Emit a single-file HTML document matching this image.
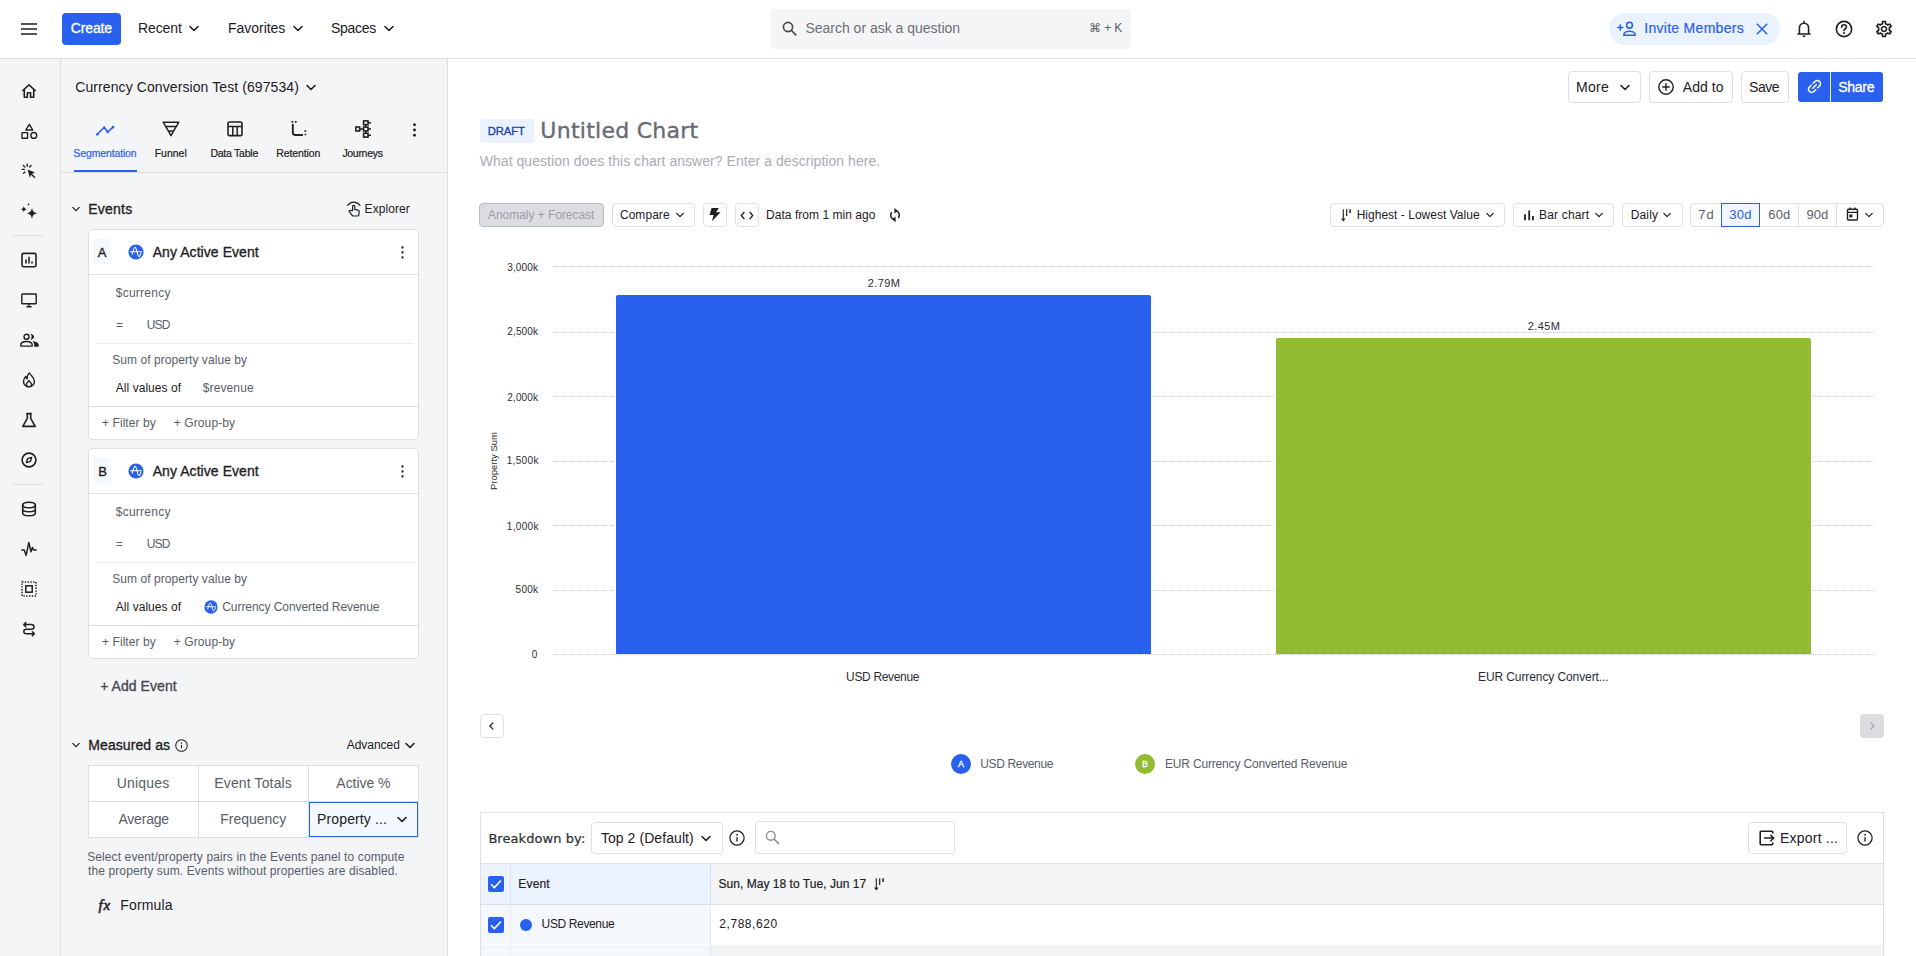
<!DOCTYPE html>
<html lang="en">
<head>
<meta charset="utf-8">
<title>Untitled Chart - Amplitude</title>
<style>
*{box-sizing:border-box;margin:0;padding:0}
html,body{width:1916px;height:956px;overflow:hidden;background:#fff}
body{font-family:"Liberation Sans",sans-serif;color:#1e2024;font-size:14px;position:relative}
.a{position:absolute}
.t{position:absolute;white-space:nowrap;line-height:20px;height:20px}
.s12{font-size:12px;line-height:16px;height:16px}
.s11{font-size:11px;line-height:14px;height:14px}
.s10{font-size:10px;line-height:12px;height:12px}
svg{position:absolute;overflow:visible}
.ic{fill:none;stroke:#1e2024;stroke-width:1.6;stroke-linecap:round;stroke-linejoin:round}
.btn{position:absolute;border:1px solid #dedfe2;border-radius:4px;background:#fff}
.g{color:#5a5e68}
.b{-webkit-text-stroke:0.33px currentColor}
#top{left:0;top:0;width:1916px;height:59px;background:#fff;border-bottom:1px solid #dedfe2}
#rail{left:0;top:59px;width:61px;height:897px;background:#f4f5f7;border-right:1px solid #dedfe2}
#panel{left:61px;top:59px;width:387px;height:897px;background:#f4f5f7;border-right:1px solid #dedfe2}
.card{position:absolute;left:88px;width:331px;background:#fff;border:1px solid #dedfe2;border-radius:4px}
.hl{position:absolute;height:1px;background:#dedfe2}
.vl{position:absolute;width:1px;background:#dedfe2}
</style>
</head>
<body>
<div class="a" id="top"></div>
<div class="a" id="rail"></div>
<div class="a" id="panel"></div>
<svg width="0" height="0" style="left:0;top:0"><defs>
<path id="chev" d="M1 1.5l4 4 4-4" fill="none" stroke="#1e2024" stroke-width="1.6" stroke-linecap="round" stroke-linejoin="round"/>
<g id="amp"><circle cx="8" cy="8" r="7.6" fill="#2960ee"/><path d="M2.400 7.700h11.200M4.200 10.300C5.200 7 6 3.200 7 3.200c1.200 0 2 4.800 2.800 7.400.5 1.600 1.100 2.200 1.700 1.700.6-.5 1-1.900 1.300-3.100" fill="none" stroke="#fff" stroke-width="1.050" stroke-linecap="round"/></g>
<g id="keb"><circle cx="1.5" cy="1.5" r="1.15"/><circle cx="1.5" cy="6.5" r="1.15"/><circle cx="1.5" cy="11.5" r="1.15"/></g>
<g id="info"><circle cx="8" cy="8" r="7.100" fill="none" stroke="#1e2024" stroke-width="1.250"/><path d="M8 7.200v4.300" stroke="#1e2024" stroke-width="1.400" fill="none"/><circle cx="8" cy="4.800" r="0.900" fill="#1e2024"/></g>
<g id="sort"><path d="M2.300 0.300V11.400M0.600 9.500l1.700 2.200 1.700-2.200" fill="none" stroke="#1e2024" stroke-width="1.100"/><path d="M5.700 0.300V7" stroke="#1e2024" stroke-width="1.200" fill="none"/><path d="M9.100 0.300V3.900" stroke="#1e2024" stroke-width="1.500" fill="none"/></g>
</defs></svg>
<!-- ===== TOP BAR ===== -->
<div id="topbar">
<svg style="left:21px;top:23px" width="16" height="12" viewBox="0 0 16 12"><path d="M0 1h16M0 6h16M0 11h16" stroke="#1e2024" stroke-width="1.400" fill="none"/></svg>
<div class="a" style="left:62px;top:13px;width:59px;height:32px;background:#2960ee;border-radius:4px"></div>
<span class="t b" style="left:70.69px;top:18px;color:#fff;letter-spacing:-0.112px">Create</span>
<span class="t" style="left:138.00px;top:18px;letter-spacing:-0.095px">Recent</span>
<svg style="left:189px;top:25px" width="10" height="7"><use href="#chev"/></svg>
<span class="t" style="left:228.00px;top:18px;letter-spacing:-0.030px">Favorites</span>
<svg style="left:293px;top:25px" width="10" height="7"><use href="#chev"/></svg>
<span class="t" style="left:331.07px;top:18px;letter-spacing:-0.286px">Spaces</span>
<svg style="left:384px;top:25px" width="10" height="7"><use href="#chev"/></svg>

<div class="a" style="left:771px;top:9px;width:360px;height:40px;background:#f4f5f7;border-radius:4px"></div>
<svg style="left:782px;top:21px" width="15" height="15" viewBox="0 0 15 15"><circle cx="6" cy="6" r="4.6" fill="none" stroke="#45484f" stroke-width="1.6"/><path d="M9.5 9.5l4.3 4.3" stroke="#45484f" stroke-width="1.7" stroke-linecap="round"/></svg>
<span class="t" style="left:805.41px;top:18px;color:#6b6f78;letter-spacing:-0.008px">Search or ask a question</span>
<span class="t s12" style="left:1089.00px;top:20px;color:#5a5e68;letter-spacing:-0.092px">⌘ + K</span>

<div class="a" style="left:1609px;top:13px;width:171px;height:32px;background:#e9f2fe;border-radius:16px"></div>
<svg style="left:1617px;top:21px" width="20" height="16" viewBox="0 0 20 16"><g fill="none" stroke="#2960ee" stroke-width="1.6" stroke-linecap="round"><path d="M0.8 6.5h5M3.3 4v5"/><circle cx="12.5" cy="4.2" r="2.9"/><path d="M6.8 14.2c0-2.6 3-3.9 5.7-3.9s5.7 1.3 5.7 3.9z" stroke-linejoin="round"/></g></svg>
<span class="t" style="left:1644.27px;top:18px;color:#2960ee;-webkit-text-stroke:0.2px #2960ee;letter-spacing:0.286px">Invite Members</span>
<svg style="left:1756px;top:23px" width="12" height="12" viewBox="0 0 12 12"><path d="M0.8 0.8l10.4 10.4M11.2 0.8L0.8 11.2" stroke="#2960ee" stroke-width="1.5" fill="none"/></svg>

<svg style="left:1796px;top:20px" width="16" height="18" viewBox="0 0 16 18"><path class="ic" d="M2 14h12M3.4 14V8.2C3.4 5.4 5.3 3.2 8 3.2s4.6 2.2 4.6 5V14M8 3V1.4"/><path d="M6.4 15.6a1.6 1.6 0 003.2 0z" fill="#1e2024"/></svg>
<svg style="left:1835px;top:20px" width="18" height="18" viewBox="0 0 18 18"><circle class="ic" cx="9" cy="9" r="7.6"/><path class="ic" d="M6.6 7.2c0-1.5 1.1-2.4 2.4-2.4s2.4.9 2.4 2.2c0 1.700-2.400 1.800-2.400 3.600"/><circle cx="9" cy="13.100" r="1" fill="#1e2024"/></svg>
<svg style="left:1873.800px;top:19px" width="20" height="20" viewBox="0 0 24 24"><path fill="#1e2024" d="M19.430 12.980c.040-.320.070-.640.070-.980s-.030-.660-.070-.980l2.110-1.650c.190-.150.240-.420.120-.640l-2-3.460c-.120-.220-.390-.300-.610-.220l-2.490 1c-.520-.400-1.080-.730-1.690-.980l-.380-2.650C14.460 2.180 14.250 2 14 2h-4c-.250 0-.460.180-.490.420l-.380 2.650c-.610.250-1.170.590-1.690.980l-2.490-1c-.230-.090-.490 0-.610.220l-2 3.460c-.130.220-.070.490.12.640l2.110 1.650c-.040.320-.070.650-.070.980s.030.660.070.980l-2.110 1.650c-.190.150-.240.420-.120.640l2 3.460c.120.220.390.300.610.220l2.490-1c.520.400 1.080.730 1.690.980l.380 2.650c.030.240.240.420.490.420h4c.250 0 .460-.180.490-.420l.380-2.650c.610-.250 1.170-.590 1.690-.980l2.490 1c.230.090.490 0 .610-.220l2-3.460c.120-.220.070-.490-.12-.640l-2.110-1.650zm-1.980-1.710c.040.310.050.520.050.730s-.02.430-.05.730l-.14 1.130.89.700 1.080.84-.7 1.210-1.270-.51-1.040-.42-.9.680c-.43.320-.84.560-1.250.73l-1.060.43-.16 1.130-.2 1.350h-1.400l-.19-1.350-.16-1.130-1.060-.43c-.43-.18-.83-.41-1.230-.71l-.91-.7-1.060.43-1.270.51-.7-1.210 1.080-.84.890-.7-.14-1.130c-.03-.31-.05-.54-.05-.74s.02-.43.050-.73l.14-1.130-.89-.7-1.080-.84.700-1.210 1.270.51 1.040.42.900-.68c.43-.32.840-.56 1.250-.73l1.060-.43.160-1.130.2-1.350h1.390l.19 1.350.16 1.130 1.060.43c.43.180.83.410 1.230.71l.91.700 1.060-.43 1.270-.51.700 1.210-1.070.85-.89.700.14 1.130zM12 8c-2.210 0-4 1.790-4 4s1.790 4 4 4 4-1.790 4-4-1.790-4-4-4zm0 6c-1.100 0-2-.9-2-2s.9-2 2-2 2 .9 2 2-.9 2-2 2z"/></svg>
</div>
<!-- ===== LEFT RAIL ===== -->
<div id="railicons">
<!-- home -->
<svg style="left:21px;top:83px" width="16" height="16" viewBox="0 0 16 16"><path class="ic" style="stroke-linecap:butt" d="M1.300 8L8 1.800 14.700 8M3.300 6.800V14.200H6.400V9.800H9.600V14.200H12.700V6.800"/></svg>
<!-- shapes -->
<svg style="left:21px;top:123px" width="16" height="16" viewBox="0 0 16 16"><path class="ic" style="stroke-width:1.400" d="M8.300 1.300l3.500 5.700H4.800z"/><rect class="ic" style="stroke-width:1.400" x="1" y="9.600" width="5.600" height="5.600"/><circle class="ic" style="stroke-width:1.400" cx="12.800" cy="12.400" r="2.900"/></svg>
<!-- cursor click -->
<svg style="left:21px;top:163px" width="16" height="16" viewBox="0 0 16 16"><path d="M6.600 6.600l7.400 3-3 1.200 3.400 3.400-1 1-3.400-3.400-1.200 3z" fill="#1e2024"/><path class="ic" style="stroke-width:1.400" d="M6.200 1.300v2M2.400 2.600l1.400 1.400M1.200 6.400h2M2.600 10.200l1.300-1.300M10 2.600L8.700 3.900"/></svg>
<!-- sparkles -->
<svg style="left:21px;top:203px" width="16" height="16" viewBox="0 0 16 16"><path d="M11 4.700c.700 3.600 1.600 4.600 5.200 5.600-3.600 1-4.500 2-5.200 5.700-.700-3.700-1.600-4.700-5.200-5.700 3.600-1 4.500-2 5.200-5.600z" fill="#1e2024"/><path d="M2.800 3c.400 2 .900 2.600 3 3.200-2.100.600-2.600 1.200-3 3.200-.400-2-.900-2.600-3-3.200 2.100-.600 2.600-1.200 3-3.200z" fill="#1e2024"/><path d="M7.600 -0.200l.4 1.100 1.100.4-1.100.4-.4 1.100-.4-1.100-1.100-.4 1.100-.4z" fill="#1e2024"/></svg>
<div class="hl" style="left:12px;top:235px;width:32px"></div>
<!-- chart box -->
<svg style="left:21px;top:252px" width="16" height="16" viewBox="0 0 16 16"><rect class="ic" x="1" y="1.400" width="14" height="13.400" rx="1.600"/><path class="ic" style="stroke-linecap:butt" d="M5 11.600V7.400M8 11.600V4.800M11 11.600V9.400"/></svg>
<!-- monitor -->
<svg style="left:21px;top:292px" width="16" height="16" viewBox="0 0 16 16"><rect class="ic" style="stroke-width:1.400" x="0.800" y="2" width="14.400" height="9.800" rx="0.600"/><path class="ic" style="stroke-width:1.400;stroke-linecap:butt" d="M5.400 14.700h5.200M8 11.800v2.800"/></svg>
<!-- users -->
<svg style="left:20px;top:332px" width="19" height="16" viewBox="0 0 19 16"><circle class="ic" style="stroke-width:1.400" cx="6.500" cy="4.800" r="2.500"/><path class="ic" style="stroke-width:1.400" d="M0.800 14.100v-1c0-2.400 2.900-3.600 5.700-3.600s5.700 1.200 5.700 3.600v1z"/><path d="M10.200 1.900c2.100 0 3.900 1.200 3.900 2.900s-1.800 2.900-3.900 2.900c.9-.7 1.400-1.700 1.400-2.900s-.5-2.200-1.400-2.900z" fill="#1e2024"/><path d="M12.500 9.200c3 .2 6.200 1.400 6.200 3.900v1.700h-4.500v-1.700c0-1.600-.6-2.900-1.700-3.900z" fill="#1e2024"/></svg>
<!-- flame -->
<svg style="left:21px;top:372px" width="16" height="16" viewBox="0 0 16 16"><path class="ic" style="stroke-width:1.400" d="M8.600 1c.3 2.300 4.800 3.800 4.800 8.400 0 3.100-2.500 5.500-5.500 5.500S2.500 12.400 2.500 9.400c0-2 .9-3.700 2.200-4.900.3 1.300.9 2 1.600 2.300C5.800 4.400 7 2.200 8.600 1z"/><path class="ic" style="stroke-width:1.300" d="M8 14.700c-1.500 0-2.500-1-2.500-2.300 0-1.600 1.500-2.200 2.500-3.800.6 1.600 2.500 2.200 2.500 3.800 0 1.300-1 2.300-2.500 2.300z"/></svg>
<!-- flask -->
<svg style="left:21px;top:412px" width="16" height="16" viewBox="0 0 16 16"><path class="ic" style="stroke-linecap:butt" d="M5.200 1.600h5.600M6.300 1.800v4.600L1.800 14.400h12.400L9.700 6.400V1.800M1.400 14.500h13.200"/></svg>
<!-- compass -->
<svg style="left:21px;top:452px" width="16" height="16" viewBox="0 0 16 16"><circle class="ic" cx="8" cy="8" r="6.900"/><path class="ic" style="stroke-width:1.500" d="M10.600 5.400L9.400 9.400 5.400 10.600 6.600 6.600z"/></svg>
<div class="hl" style="left:12px;top:484px;width:32px"></div>
<!-- database -->
<svg style="left:21px;top:501px" width="16" height="16" viewBox="0 0 16 16"><ellipse class="ic" cx="8" cy="4" rx="6.300" ry="2.800"/><path class="ic" d="M1.700 4v8c0 1.600 2.800 2.800 6.300 2.800s6.300-1.200 6.300-2.800V4M1.700 8c0 1.600 2.800 2.800 6.300 2.800s6.300-1.200 6.300-2.800"/></svg>
<!-- pulse -->
<svg style="left:21px;top:541px" width="16" height="16" viewBox="0 0 16 16"><path class="ic" style="stroke-width:1.500" d="M0.800 9h2.400l2 5.400 2.600-13 2.200 9.400 1.400-4.400 1.200 2.600h2.600"/></svg>
<!-- dotted square -->
<svg style="left:21px;top:581px" width="16" height="16" viewBox="0 0 16 16"><rect x="1" y="1" width="14" height="14" fill="none" stroke="#1e2024" stroke-width="1.500" stroke-dasharray="1.400 1.400"/><rect x="4.800" y="4.800" width="6.400" height="6.400" fill="none" stroke="#1e2024" stroke-width="1.500"/></svg>
<!-- arrows -->
<svg style="left:21px;top:621px" width="16" height="16" viewBox="0 0 16 16"><path class="ic" style="stroke-width:1.500" d="M2.800 3.600h7.600c1.600 0 2.600 1 2.600 2.300s-1 2.300-2.600 2.300H5.400C3.800 8.200 2.800 9.200 2.800 10.500s1 2.300 2.600 2.300h7.800M4.800 1.600L2.800 3.600l2 2M11.400 10.800l2 2-2 2"/></svg>
</div>
<!-- ===== LEFT PANEL ===== -->
<div id="leftpanel">
<span class="t" style="left:75.31px;top:77px;letter-spacing:0.088px">Currency Conversion Test (697534)</span>
<svg style="left:306px;top:84px" width="10" height="7"><use href="#chev"/></svg>

<!-- tabs -->
<svg style="left:95px;top:124px" width="20" height="13" viewBox="0 0 20 13"><path d="M2.400 10.200L9.200 3.300 12.700 8 18.100 3.100" fill="none" stroke="#2960ee" stroke-width="1.600" stroke-linejoin="round"/><circle cx="2.400" cy="10.300" r="1.400" fill="#2960ee"/><circle cx="18.100" cy="3.100" r="1.300" fill="#2960ee"/><circle cx="12.700" cy="8" r="1.200" fill="#2960ee"/><circle cx="9.200" cy="3.300" r="1" fill="#2960ee"/></svg>
<span class="t s11" style="left:73.36px;top:146px;font-size:10.500px;color:#2960ee;letter-spacing:-0.136px;-webkit-text-stroke:0.2px #2960ee">Segmentation</span>
<div class="a" style="left:74px;top:170px;width:63px;height:2px;background:#2960ee"></div>
<svg style="left:162px;top:121px" width="18" height="16" viewBox="0 0 18 16"><path class="ic" style="stroke-width:1.500" d="M1.200 1.200h15.600L9 14.600zM3.800 5.600h10.400M6.300 10h5.400"/></svg>
<span class="t s11" style="left:154.68px;top:146px;font-size:10.500px;letter-spacing:0.003px;-webkit-text-stroke:0.2px #1e2024">Funnel</span>
<svg style="left:227px;top:121px" width="16" height="16" viewBox="0 0 16 16"><rect class="ic" x="1" y="1" width="14" height="13.600" rx="1.400"/><path class="ic" style="stroke-width:1.500;stroke-linecap:butt" d="M1 5.400h14M5.800 5.400v9M10.200 5.400v9"/></svg>
<span class="t s11" style="left:210.40px;top:146px;font-size:10.500px;letter-spacing:-0.242px;-webkit-text-stroke:0.2px #1e2024">Data Table</span>
<svg style="left:290px;top:121px" width="18" height="16" viewBox="0 0 18 16"><path class="ic" style="stroke-width:1.900" d="M2.800 3.800v7.400c0 1.800 1 2.800 2.800 2.800h6.600"/><path d="M1.600 0.900h1.700M4.900 0.900h1.700M15.400 9.300v1.600M15.400 12.700v1.600" stroke="#1e2024" stroke-width="1.600" fill="none"/></svg>
<span class="t s11" style="left:276.21px;top:146px;font-size:10.500px;letter-spacing:-0.101px;-webkit-text-stroke:0.2px #1e2024">Retention</span>
<svg style="left:355px;top:120px" width="17" height="18" viewBox="0 0 17 18"><g fill="none" stroke="#1e2024" stroke-width="1.600"><rect x="0.900" y="7" width="3.800" height="4"/><rect x="8.600" y="0.900" width="4.400" height="3.800"/><rect x="8.600" y="7.100" width="4.400" height="3.800"/><rect x="8.600" y="13.300" width="4.400" height="3.800"/><path d="M4.700 9h3.900M10.800 4.700v2.400M10.800 10.900v2.400M13 2.800h3M13 9h3M13 15.200h3"/></g></svg>
<span class="t s11" style="left:342.39px;top:146px;font-size:10.500px;letter-spacing:-0.296px;-webkit-text-stroke:0.2px #1e2024">Journeys</span>
<svg style="left:413.300px;top:122.800px" width="3" height="14" viewBox="0 0 3 14" fill="#1e2024"><circle cx="1.500" cy="1.700" r="1.450"/><circle cx="1.500" cy="7" r="1.450"/><circle cx="1.500" cy="12.300" r="1.450"/></svg>
<div class="hl" style="left:61px;top:172px;width:386px"></div>

<!-- Events header -->
<svg style="left:72px;top:206px" width="8" height="6" viewBox="0 0 10 7"><use href="#chev"/></svg>
<span class="t b" style="left:88.30px;top:199px;letter-spacing:0.219px">Events</span>
<svg style="left:347px;top:201px" width="14" height="16" viewBox="0 0 14 16"><g fill="none" stroke="#1e2024" stroke-width="1.200" stroke-linecap="round" stroke-linejoin="round"><path d="M0.600 4.300C2.300 2.200 4.400 1.100 6.800 1.100s4.500 1.100 6.200 3.200"/><path d="M5.600 9.600V5.400c0-.7.500-1.100 1.100-1.100s1.100.4 1.100 1.100v3l3.200.7c.9.200 1.300.8 1.200 1.600l-.4 3.200c-.1.700-.6 1.100-1.300 1.100H6.400c-.5 0-.9-.2-1.200-.6L2.400 10.800c-.3-.4-.2-.9.200-1.200.5-.3 1-.2 1.400.1z"/></g></svg>
<span class="t s12 " style="left:364.59px;top:201px;letter-spacing:0.056px">Explorer</span>

<!-- Card A -->
<div class="card" style="top:229px;height:211px"></div>
<div class="a" style="left:93px;top:239px;width:18px;height:25px;background:#f5f8fd;border-radius:2px"></div>
<span class="t b" style="left:97.800px;top:242.500px;font-size:13px">A</span>
<svg style="left:128px;top:244px" width="16" height="16" viewBox="0 0 16 16"><use href="#amp"/></svg>
<span class="t b" style="left:152.70px;top:242px;letter-spacing:0.063px">Any Active Event</span>
<svg style="left:400.500px;top:246px" width="3" height="13" fill="#1e2024" viewBox="0 0 3 13"><use href="#keb"/></svg>
<div class="hl" style="left:89px;top:274px;width:329px"></div>
<span class="t s12 g" style="left:115.77px;top:285px;letter-spacing:0.241px">$currency</span>
<span class="t s12 g" style="left:116px;top:317px">=</span>
<span class="t s12 g" style="left:146.70px;top:317px;letter-spacing:-0.796px">USD</span>
<div class="hl" style="left:97px;top:343px;width:317px;background:#ececef"></div>
<span class="t s12 g" style="left:112.20px;top:352px;letter-spacing:0.061px">Sum of property value by</span>
<span class="t s12" style="left:115.76px;top:380px;letter-spacing:0.052px">All values of</span>
<span class="t s12 g" style="left:202.77px;top:380px;letter-spacing:0.114px">$revenue</span>
<div class="hl" style="left:89px;top:406px;width:329px"></div>
<span class="t s12 g" style="left:102.04px;top:415px;letter-spacing:0.067px">+ Filter by</span>
<span class="t s12 g" style="left:173.65px;top:415px;letter-spacing:0.120px">+ Group-by</span>

<!-- Card B -->
<div class="card" style="top:448px;height:211px"></div>
<div class="a" style="left:93px;top:458px;width:18px;height:25px;background:#f5f8fd;border-radius:2px"></div>
<span class="t b" style="left:98.300px;top:461.500px;font-size:13px">B</span>
<svg style="left:128px;top:463px" width="16" height="16" viewBox="0 0 16 16"><use href="#amp"/></svg>
<span class="t b" style="left:152.70px;top:461px;letter-spacing:0.063px">Any Active Event</span>
<svg style="left:400.500px;top:465px" width="3" height="13" fill="#1e2024" viewBox="0 0 3 13"><use href="#keb"/></svg>
<div class="hl" style="left:89px;top:493px;width:329px"></div>
<span class="t s12 g" style="left:115.77px;top:504px;letter-spacing:0.241px">$currency</span>
<span class="t s12 g" style="left:116px;top:536px">=</span>
<span class="t s12 g" style="left:146.70px;top:536px;letter-spacing:-0.796px">USD</span>
<div class="hl" style="left:97px;top:562px;width:317px;background:#ececef"></div>
<span class="t s12 g" style="left:112.20px;top:571px;letter-spacing:0.061px">Sum of property value by</span>
<span class="t s12" style="left:115.76px;top:599px;letter-spacing:0.052px">All values of</span>
<svg style="left:204px;top:600px" width="14" height="14" viewBox="0 0 16 16"><use href="#amp"/></svg>
<span class="t s12 g" style="left:222.26px;top:599px;letter-spacing:-0.060px">Currency Converted Revenue</span>
<div class="hl" style="left:89px;top:625px;width:329px"></div>
<span class="t s12 g" style="left:102.04px;top:634px;letter-spacing:0.067px">+ Filter by</span>
<span class="t s12 g" style="left:173.65px;top:634px;letter-spacing:0.120px">+ Group-by</span>

<span class="t b" style="left:100.15px;top:676px;color:#45484f;letter-spacing:0.060px">+ Add Event</span>

<!-- Measured as -->
<svg style="left:72px;top:742px" width="8" height="6" viewBox="0 0 10 7"><use href="#chev"/></svg>
<span class="t b" style="left:88.30px;top:735px;letter-spacing:0.079px">Measured as</span>
<svg style="left:174.500px;top:738.500px" width="13" height="13" viewBox="0 0 16 16"><use href="#info"/></svg>
<span class="t s12" style="left:346.77px;top:737px;letter-spacing:-0.039px">Advanced</span>
<svg style="left:405px;top:742px" width="10" height="7"><use href="#chev"/></svg>

<div class="a" style="left:88px;top:765px;width:331px;height:73px;background:#fff;border:1px solid #dedfe2"></div>
<div class="hl" style="left:88px;top:801px;width:331px"></div>
<div class="vl" style="left:198px;top:765px;height:73px"></div>
<div class="vl" style="left:308px;top:765px;height:73px"></div>
<div class="a" style="left:309px;top:802px;width:109px;height:35px;background:#f3f7fe;border:1px solid #2960ee"></div>
<span class="t g" style="left:88.54px;top:773px;width:109px;text-align:center;letter-spacing:0.202px">Uniques</span>
<span class="t g" style="left:198.64px;top:773px;width:109px;text-align:center;letter-spacing:0.141px">Event Totals</span>
<span class="t g" style="left:308.95px;top:773px;width:109px;text-align:center;letter-spacing:-0.033px">Active %</span>
<span class="t g" style="left:89.18px;top:809px;width:109px;text-align:center;letter-spacing:-0.195px">Average</span>
<span class="t g" style="left:198.72px;top:809px;width:109px;text-align:center;letter-spacing:-0.026px">Frequency</span>
<span class="t" style="left:317.06px;top:809px;letter-spacing:0.130px">Property ...</span>
<svg style="left:396.500px;top:816px" width="10" height="7"><use href="#chev"/></svg>

<span class="t s12 g" style="left:87.15px;top:849px;letter-spacing:0.114px">Select event/property pairs in the Events panel to compute</span>
<span class="t s12 g" style="left:88.00px;top:863px;letter-spacing:0.113px">the property sum. Events without properties are disabled.</span>
<span class="t" style="left:98.500px;top:895px;font-family:'Liberation Serif',serif;font-style:italic;font-size:15px;letter-spacing:0.800px;-webkit-text-stroke:0.550px #1e2024">fx</span>
<span class="t" style="left:120.37px;top:895px;letter-spacing:0.123px">Formula</span>
</div>
<!-- ===== MAIN HEADER ===== -->
<div id="mainhead">
<div class="btn" style="left:1568px;top:71px;width:73px;height:32px"></div>
<span class="t" style="left:1576.00px;top:77px;letter-spacing:0.263px">More</span>
<svg style="left:1619.500px;top:84px" width="10" height="7"><use href="#chev"/></svg>
<div class="btn" style="left:1649px;top:71px;width:84px;height:32px"></div>
<svg style="left:1658px;top:79px" width="16" height="16" viewBox="0 0 16 16"><circle cx="8" cy="8" r="7.200" fill="none" stroke="#1e2024" stroke-width="1.400"/><path d="M8 4.300v7.400M4.300 8h7.400" stroke="#1e2024" stroke-width="1.400" fill="none"/></svg>
<span class="t" style="left:1682.77px;top:77px;letter-spacing:0.058px">Add to</span>
<div class="btn" style="left:1741px;top:71px;width:48px;height:32px"></div>
<span class="t" style="left:1749.07px;top:77px;letter-spacing:-0.501px">Save</span>
<div class="a" style="left:1798px;top:72px;width:85px;height:30px;background:#2960ee;border-radius:3px"></div>
<div class="a" style="left:1830px;top:72px;width:1px;height:30px;background:#e6ecfc"></div>
<svg style="left:1804.600px;top:77.300px" width="19" height="19" viewBox="0 0 24 24"><path transform="rotate(-45 12 12)" fill="#fff" d="M3.900 12c0-1.710 1.390-3.100 3.100-3.100h4V7H7c-2.760 0-5 2.240-5 5s2.240 5 5 5h4v-1.900H7c-1.710 0-3.100-1.390-3.100-3.100zM8 13h8v-2H8v2zm9-6h-4v1.900h4c1.710 0 3.100 1.390 3.100 3.100s-1.390 3.100-3.100 3.100h-4V17h4c2.760 0 5-2.240 5-5s-2.240-5-5-5z"/></svg>
<span class="t b" style="left:1838.25px;top:77px;color:#fff;letter-spacing:-0.279px">Share</span>

<div class="a" style="left:480px;top:119px;width:54px;height:24px;background:#e9f2fe;border-radius:3px"></div>
<span class="t s12" style="left:487.79px;top:123.300px;font-size:11.300px;color:#1f3fae;-webkit-text-stroke:0.3px #1f3fae;letter-spacing:-0.113px">DRAFT</span>
<span class="t" style="left:540.35px;top:117px;font-family:'DejaVu Sans',sans-serif;font-size:22px;line-height:28px;height:28px;color:#666a73;-webkit-text-stroke:0.35px #666a73;letter-spacing:0.263px">Untitled Chart</span>
<span class="t" style="left:479.71px;top:151px;color:#a9acb4;letter-spacing:0.046px">What question does this chart answer? Enter a description here.</span>

<!-- toolbar -->
<div class="a" style="left:479px;top:203px;width:125px;height:24px;background:#dcdde1;border:1px solid #b9bbc2;border-radius:4px"></div>
<span class="t s12" style="left:487.97px;top:207px;color:#9b9ea7;letter-spacing:-0.040px">Anomaly + Forecast</span>
<div class="btn" style="left:612px;top:203px;width:83px;height:24px"></div>
<span class="t s12" style="left:619.92px;top:207px;letter-spacing:0.056px">Compare</span>
<svg style="left:675.500px;top:212px" width="8" height="6" viewBox="0 0 10 7"><use href="#chev"/></svg>
<div class="btn" style="left:703px;top:203px;width:24px;height:24px"></div>
<svg style="left:709px;top:207px" width="12" height="15" viewBox="0 0 12 15"><path d="M2.600 1H9.800L7.100 5.300H11.600L2.900 14.200 4.700 8.100H0.500z" fill="#1e2024"/></svg>
<div class="btn" style="left:735px;top:203px;width:24px;height:24px"></div>
<svg style="left:740px;top:210.500px" width="14" height="9" viewBox="0 0 14 9"><path d="M4.400 0.900L1.300 4.500 4.400 8.100M9.600 0.900l3.100 3.600L9.600 8.100" fill="none" stroke="#1e2024" stroke-width="1.400"/></svg>
<span class="t s12" style="left:766.07px;top:207px;letter-spacing:0.034px">Data from 1 min ago</span>
<svg style="left:889px;top:208px" width="12" height="14" viewBox="0 0 12 14"><g fill="none" stroke="#1e2024" stroke-width="1.600"><path d="M6 2.800A4.300 4.300 0 0110.300 7.100c0 1.100-.4 2.100-1.100 2.900M6 11.400A4.300 4.300 0 011.700 7.100c0-1.100.4-2.100 1.100-2.900"/></g><path d="M5.400 0L8.800 2.800 5.400 5.600zM6.600 14.200L3.200 11.400 6.600 8.600z" fill="#1e2024"/></svg>

<div class="btn" style="left:1330px;top:203px;width:175px;height:24px"></div>
<svg style="left:1341px;top:209px" width="10" height="12" viewBox="0 0 10 12"><use href="#sort"/></svg>
<span class="t s12" style="left:1356.63px;top:207px;letter-spacing:0.021px">Highest - Lowest Value</span>
<svg style="left:1485.500px;top:212px" width="8" height="6" viewBox="0 0 10 7"><use href="#chev"/></svg>
<div class="btn" style="left:1513px;top:203px;width:101px;height:24px"></div>
<svg style="left:1523px;top:209.500px" width="11" height="11" viewBox="0 0 11 11"><path d="M2 4.200V10.200M6.200 0.600V10.200M10 6.100V10.200" stroke="#1e2024" stroke-width="1.800" fill="none"/></svg>
<span class="t s12" style="left:1539.07px;top:207px;letter-spacing:0.164px">Bar chart</span>
<svg style="left:1594.500px;top:212px" width="8" height="6" viewBox="0 0 10 7"><use href="#chev"/></svg>
<div class="btn" style="left:1622px;top:203px;width:61px;height:24px"></div>
<span class="t s12" style="left:1630.63px;top:207px;letter-spacing:0.165px">Daily</span>
<svg style="left:1663px;top:212px" width="8" height="6" viewBox="0 0 10 7"><use href="#chev"/></svg>

<div class="btn" style="left:1690px;top:203px;width:194px;height:24px"></div>
<div class="vl" style="left:1798px;top:204px;height:22px"></div>
<div class="vl" style="left:1836px;top:204px;height:22px"></div>
<div class="a" style="left:1721px;top:203px;width:39px;height:24px;background:#f1f6fe;border:1px solid #2960ee"></div>
<span class="t s12 g" style="left:1698.24px;top:207px;font-size:13px;letter-spacing:0.924px">7d</span>
<span class="t s12" style="left:1729.18px;top:207px;color:#2960ee;font-size:13px;letter-spacing:0.297px">30d</span>
<span class="t s12 g" style="left:1768.25px;top:207px;font-size:13px;letter-spacing:0.206px">60d</span>
<span class="t s12 g" style="left:1806.55px;top:207px;font-size:13px;letter-spacing:0.048px">90d</span>
<svg style="left:1845.500px;top:207.300px" width="13" height="14" viewBox="0 0 13 14"><rect x="1.500" y="2.200" width="10" height="10.800" rx="1.200" fill="none" stroke="#1e2024" stroke-width="1.400"/><path d="M1.500 5.400h10M4 0.600v2.400M9 0.600v2.400" stroke="#1e2024" stroke-width="1.400" fill="none"/><rect x="3.400" y="7.400" width="3" height="3" fill="#1e2024"/></svg>
<svg style="left:1864.500px;top:212px" width="8" height="6" viewBox="0 0 10 7"><use href="#chev"/></svg>
</div>
<!-- ===== CHART ===== -->
<svg id="chart" style="left:480px;top:250px" width="1404" height="450" viewBox="480 250 1404 450">
<g stroke="#c6c9d0" stroke-width="1" stroke-dasharray="1 1" fill="none">
<path d="M553 266.500H1874"/><path d="M553 332.500H1874"/><path d="M553 396.500H1874"/><path d="M553 461.500H1874"/><path d="M553 525.500H1874"/><path d="M553 590.500H1874"/><path d="M553 654.500H1874"/>
</g>
<path d="M614 654V293H1153V654zM1274 654V336H1813V654z" fill="#fff"/>
<path d="M616 654V297a2 2 0 012-2H1149a2 2 0 012 2V654z" fill="#2960ee"/>
<path d="M1276 654V340a2 2 0 012-2H1809a2 2 0 012 2V654z" fill="#92bb31"/>
</svg>
<span class="t s10" style="left:507.16px;top:262px;color:#2b2d33;letter-spacing:0.173px">3,000k</span>
<span class="t s10" style="left:507.24px;top:326px;color:#2b2d33;letter-spacing:0.160px">2,500k</span>
<span class="t s10" style="left:507.28px;top:392px;color:#2b2d33;letter-spacing:0.142px">2,000k</span>
<span class="t s10" style="left:506.66px;top:455px;color:#2b2d33;letter-spacing:0.348px">1,500k</span>
<span class="t s10" style="left:506.85px;top:521px;color:#2b2d33;letter-spacing:0.313px">1,000k</span>
<span class="t s10" style="left:515.62px;top:584px;color:#2b2d33;letter-spacing:0.239px">500k</span>
<span class="t s10" style="left:531.86px;top:649px;color:#2b2d33;letter-spacing:0.000px">0</span>
<span class="t" style="left:867.80px;top:276px;font-size:11px;line-height:14px;height:14px;color:#2b2d33;letter-spacing:0.396px">2.79M</span>
<span class="t" style="left:1527.71px;top:319px;font-size:11px;line-height:14px;height:14px;color:#2b2d33;letter-spacing:0.405px">2.45M</span>
<span class="t s12" style="left:846.11px;top:669px;color:#2b2d33;letter-spacing:-0.341px">USD Revenue</span>
<span class="t s12" style="left:1477.99px;top:669px;color:#2b2d33;letter-spacing:-0.094px">EUR Currency Convert...</span>
<span class="t" style="left:463.5px;top:454.5px;width:60px;text-align:center;font-size:9.5px;line-height:12px;height:12px;color:#2b2d33;transform:rotate(-90deg)">Property Sum</span>

<div class="btn" style="left:480px;top:714px;width:24px;height:24px"></div>
<svg style="left:489px;top:722px" width="5" height="8" viewBox="0 0 5 8"><path d="M4.200 0.600L0.900 4l3.300 3.400" fill="none" stroke="#1e2024" stroke-width="1.300"/></svg>
<div class="a" style="left:1860px;top:714px;width:24px;height:24px;background:#dcdde1;border-radius:4px"></div>
<svg style="left:1869.500px;top:722px" width="5" height="8" viewBox="0 0 5 8"><path d="M0.800 0.600L4.100 4 0.800 7.400" fill="none" stroke="#9b9ea7" stroke-width="1.200"/></svg>

<!-- legend -->
<div class="a" style="left:951px;top:754px;width:20px;height:20px;border-radius:10px;background:#2960ee"></div>
<span class="t" style="left:951px;top:757px;width:20px;text-align:center;font-size:9px;line-height:14px;height:14px;color:#fff;-webkit-text-stroke:0.300px #fff">A</span>
<span class="t s12 g" style="left:980.30px;top:756px;letter-spacing:-0.358px">USD Revenue</span>
<div class="a" style="left:1135px;top:754px;width:20px;height:20px;border-radius:10px;background:#92bb31"></div>
<span class="t" style="left:1135px;top:757px;width:20px;text-align:center;font-size:9px;line-height:14px;height:14px;color:#fff;-webkit-text-stroke:0.300px #fff">B</span>
<span class="t s12 g" style="left:1164.93px;top:756px;letter-spacing:-0.170px">EUR Currency Converted Revenue</span>
<!-- ===== TABLE ===== -->
<div class="a" style="left:480px;top:812px;width:1404px;height:160px;border:1px solid #dedfe2"></div>
<span class="t" style="left:488.38px;top:828.75px;font-family:'DejaVu Sans',sans-serif;font-size:13px;color:#2b2d33;-webkit-text-stroke:0.200px #2b2d33;letter-spacing:0.072px">Breakdown by:</span>
<div class="btn" style="left:591px;top:822px;width:132px;height:32px"></div>
<span class="t" style="left:600.88px;top:828px;letter-spacing:0.071px">Top 2 (Default)</span>
<svg style="left:701px;top:835px" width="10" height="7"><use href="#chev"/></svg>
<svg style="left:729px;top:830px" width="16" height="16" viewBox="0 0 16 16"><use href="#info"/></svg>
<div class="btn" style="left:755px;top:821px;width:200px;height:33px"></div>
<svg style="left:764.500px;top:830px" width="15" height="15" viewBox="0 0 15 15"><circle cx="5.800" cy="5.800" r="4.400" fill="none" stroke="#8d9099" stroke-width="1.400"/><path d="M9.200 9.200l4.400 4.400" stroke="#8d9099" stroke-width="1.500" stroke-linecap="round"/></svg>
<div class="btn" style="left:1748px;top:822px;width:99px;height:32px"></div>
<svg style="left:1759px;top:830px" width="16" height="16" viewBox="0 0 16 16"><path d="M13.800 3.400V2.200c0-.6-.4-1-1-1H2.200c-.6 0-1 .4-1 1v11.600c0 .6.400 1 1 1h10.600c.6 0 1-.4 1-1v-1.200" fill="none" stroke="#1e2024" stroke-width="1.600"/><path d="M5 8h9.400M11.400 4.800l3.200 3.200-3.200 3.200" fill="none" stroke="#1e2024" stroke-width="1.600"/></svg>
<span class="t" style="left:1780.10px;top:828px;letter-spacing:0.193px">Export ...</span>
<svg style="left:1857px;top:830px" width="16" height="16" viewBox="0 0 16 16"><use href="#info"/></svg>

<div class="a" style="left:481px;top:864px;width:230px;height:40px;background:#ebf4fe"></div>
<div class="a" style="left:711px;top:864px;width:1172px;height:40px;background:#f4f5f7"></div>
<div class="hl" style="left:481px;top:863px;width:1402px"></div>
<div class="hl" style="left:481px;top:904px;width:1402px"></div>
<div class="a" style="left:481px;top:905px;width:230px;height:39px;background:#f4f7fb"></div>
<div class="a" style="left:481px;top:945px;width:1402px;height:11px;background:#f3f4f6"></div>
<div class="a" style="left:481px;top:945px;width:230px;height:11px;background:#f4f7fb"></div>
<div class="vl" style="left:510px;top:864px;height:40px"></div><div class="vl" style="left:510px;top:905px;height:51px;background:#eceef2"></div>
<div class="vl" style="left:710px;top:864px;height:40px"></div><div class="vl" style="left:710px;top:905px;height:51px;background:#e6e8ec"></div>
<div class="a" style="left:488px;top:876px;width:16px;height:16px;background:#2960ee;border-radius:2px"></div>
<svg style="left:490px;top:879px" width="12" height="10" viewBox="0 0 12 10"><path d="M1 5.200l3.400 3.400L11 1.400" fill="none" stroke="#fff" stroke-width="1.500"/></svg>
<div class="a" style="left:488px;top:917px;width:16px;height:16px;background:#2960ee;border-radius:2px"></div>
<svg style="left:490px;top:920px" width="12" height="10" viewBox="0 0 12 10"><path d="M1 5.200l3.400 3.400L11 1.400" fill="none" stroke="#fff" stroke-width="1.500"/></svg>
<span class="t s12" style="left:518.32px;top:876px;-webkit-text-stroke:0.200px #1e2024;letter-spacing:0.157px">Event</span>
<span class="t s12" style="left:718.42px;top:876px;-webkit-text-stroke:0.200px #1e2024;letter-spacing:0.042px">Sun, May 18 to Tue, Jun 17</span>
<svg style="left:874px;top:878px" width="10" height="12" viewBox="0 0 10 12"><use href="#sort"/></svg>
<div class="a" style="left:520px;top:918.500px;width:12px;height:12px;border-radius:6px;background:#2960ee"></div>
<span class="t s12" style="left:541.62px;top:916px;letter-spacing:-0.366px">USD Revenue</span>
<span class="t s12" style="left:719.33px;top:916px;letter-spacing:0.547px">2,788,620</span>
</body>
</html>
